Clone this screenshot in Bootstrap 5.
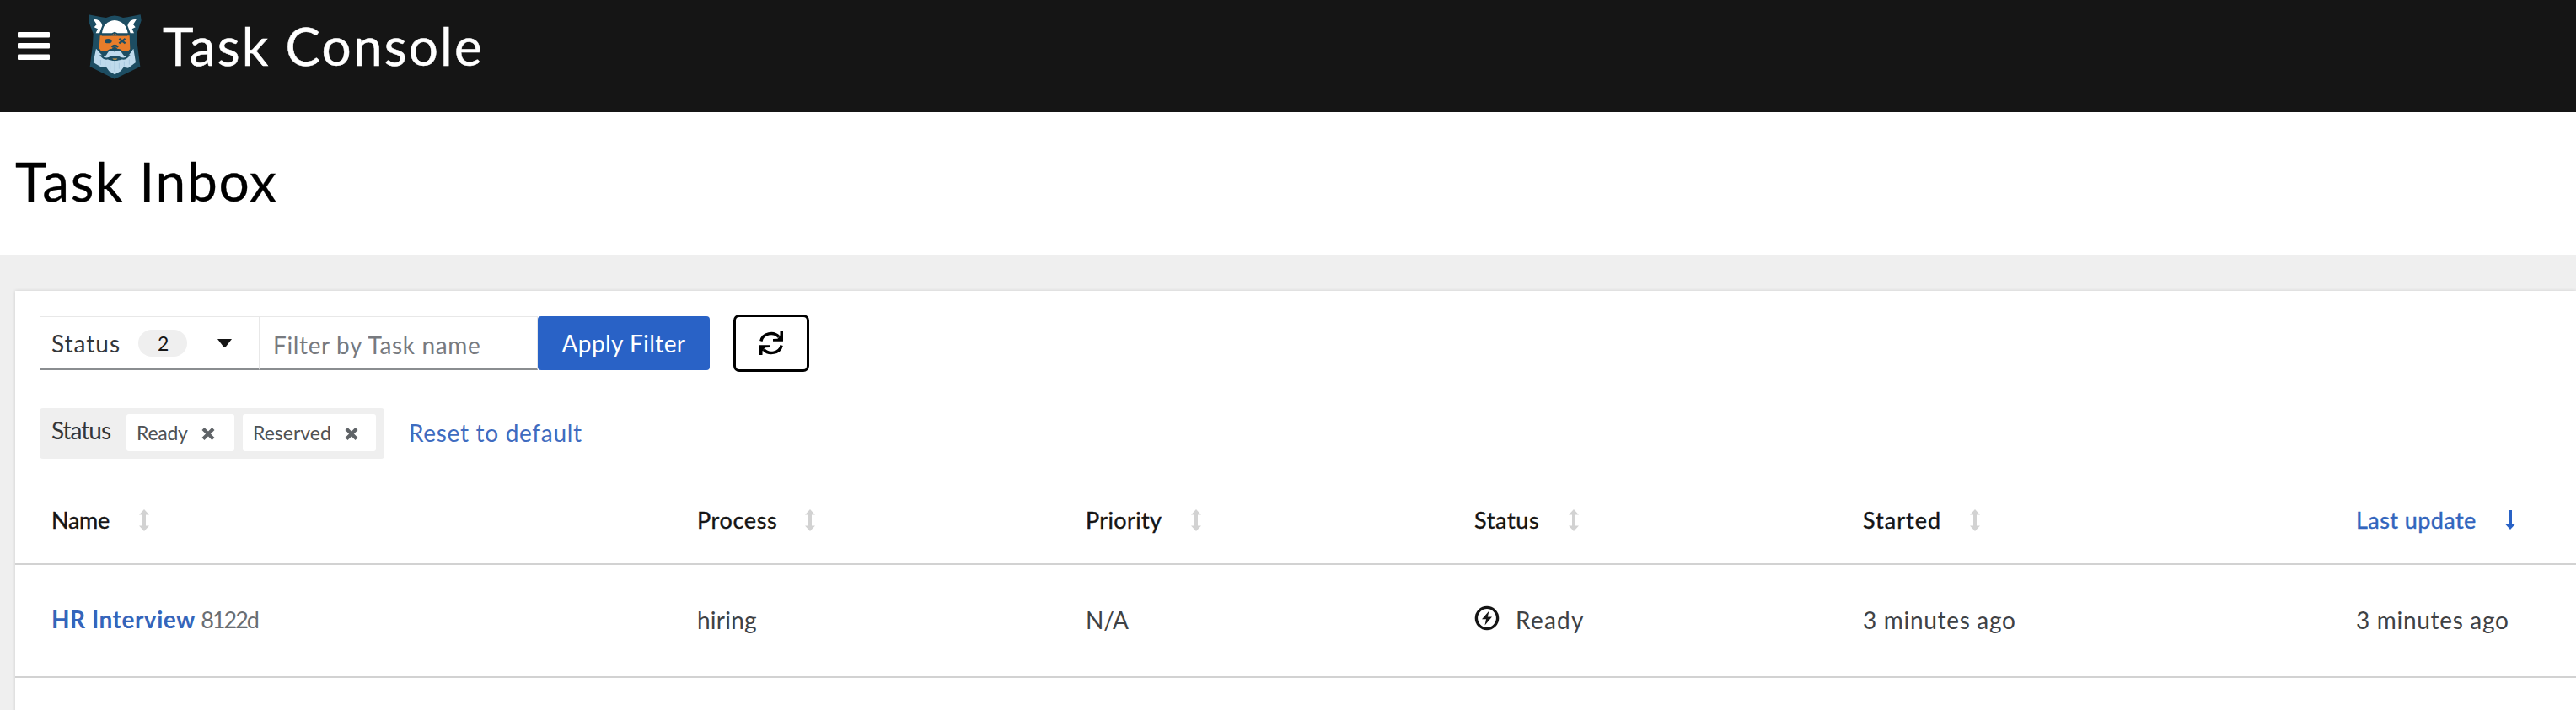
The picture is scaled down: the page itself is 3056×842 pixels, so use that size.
<!DOCTYPE html>
<html lang="en">
<head>
<meta charset="utf-8">
<meta name="viewport" content="width=device-width, initial-scale=1">
<title>Task Console</title>
<link rel="stylesheet" href="https://cdn.jsdelivr.net/npm/bootstrap@5.3.0/dist/css/bootstrap.min.css">
<style>
  body{font-family:Lato,"Liberation Sans",sans-serif;font-size:28px;line-height:34px;background:#efefef;color:#151515;height:842px;overflow:hidden}
  svg{display:block;flex:none}
  .topbar{height:133px;background:#151515;padding-left:21px}
  .burger{border:0;background:none;padding:0;margin-top:37px}
  .brand-logo{margin:5px 0 0 31px}
  .brand-name{color:#fff;font-size:62px;line-height:74px;letter-spacing:2.2px;margin:17px 0 0 13px;-webkit-text-stroke:.5px #fff}
  .page-head{height:170px;padding:43px 0 0 18px}
  .page-head h1{font-size:64px;font-weight:400;line-height:78px;letter-spacing:1.69px;color:#000;-webkit-text-stroke:.3px #000;margin:0}
  .panel{margin:42px 0 0 18px;height:500px;box-shadow:0 0 4px rgba(3,3,3,.14)}
  .tools{padding:30px 0 0 29px;height:94px}
  .field{height:64px;border:1px solid #e8e8e8;border-bottom:2px solid #8a8d90;border-radius:0;background:#fff}
  .select-toggle{width:261px;padding:0 0 0 13px;letter-spacing:1px;color:#33363a}
  .count{width:58px;height:32px;line-height:32px;margin-left:21px;background:#efefef;font-size:23px;letter-spacing:0;color:#151515;text-align:center;padding-left:1px}
  .caret{margin-left:36px}
  .task-name{width:330px;border-left-width:0;padding:4px 0 0 16px;font-size:28px;letter-spacing:.64px}
  .task-name::placeholder{color:#777a7f;opacity:1}
  .apply{width:204px;height:64px;background:#2962c6;color:#fff;border-radius:4px;border:0;padding:0;font-size:28px;letter-spacing:.42px}
  .refresh{width:90px;height:68px;margin:-2px 0 0 28px;border:3px solid #000;border-radius:7px;background:#fff;padding:0}
  .chips{padding:45px 0 0 29px;height:127px}
  .chip-group{height:60px;width:409px;background:#efefef;border-radius:4px;padding:7px 0 9px 14px}
  .chip-label{width:89px;letter-spacing:-1px;color:#33363a;line-height:38px}
  .chip{height:44px;background:#fff;border-radius:3px;font-size:23px;color:#4f5255;padding:0 0 1px 12px}
  .chip svg{margin-top:3px}
  .reset{color:#3f6cc0;letter-spacing:.69px;margin:12px 0 0 29px;text-decoration:none}
  .tasks{table-layout:fixed;width:3038px;margin:0}
  .tasks>:not(caption)>*>*{padding:0 0 0 43px;border-bottom:2px solid #d2d2d2;vertical-align:middle;background:transparent;color:#3f4245;white-space:nowrap}
  .tasks thead th{height:103px;font-size:27px;font-weight:400;color:#151515;-webkit-text-stroke:.4px currentColor;padding-bottom:0}
  .tasks thead th.sorted{color:#3265bd}
  .tasks tbody td{height:134px;padding-bottom:3px}
  .task-link{color:#3465bb;font-weight:700;letter-spacing:.51px;text-decoration:none}
  .task-id{color:#6a6e73;font-size:27px;letter-spacing:-2px;margin-left:-1px}
  .s4{letter-spacing:.64px}.ago{letter-spacing:.69px}
</style>
</head>
<body>
<header class="topbar d-flex align-items-start">
  <button class="burger" aria-label="Menu"><svg width="38" height="41" viewBox="0 0 38 41" fill="#fff"><rect y="1" width="38" height="6.500" rx="1"/><rect y="14" width="38" height="6.500" rx="1"/><rect y="27.500" width="38" height="6.500" rx="1"/></svg></button>
  <svg class="brand-logo" width="90" height="95" viewBox="0 0 270 285">
    <path d="M45 37L92 46L108 48Q138 33 168 48L184 46L230 37L233 58L217 105L219 145L229 222L138 266L50 222L60 145L62 105L46 62Z" fill="#1d4d62"/>
    <path d="M62 53Q91 54 94 76L84 103H71L78 88L65 82L74 72ZM216 53Q188 54 184 76L194 103H207L200 88L212 82L204 72Z" fill="#fff"/>
    <path d="M93 103Q98 61 138 57Q178 61 185 103L148 103L138 98L128 103Z" fill="#fff"/>
    <path d="M86 112H125L138 103L151 112H191L193 160L185 168L156 165L138 150L120 165L91 168L83 157Z" fill="#e87d2b"/>
    <path d="M93 110H183M138 101V112" stroke="#1d4d62" stroke-width="5"/>
    <ellipse cx="115" cy="131" rx="13" ry="8" fill="#1d4d62"/>
    <path d="M154 123l22 16M176 123l-22 16M128 153Q138 141 150 153" fill="none" stroke="#1d4d62" stroke-width="7"/>
    <path d="M72 158L94 182Q101 187 118 198L138 202L160 198Q177 187 188 182L205 158L213 207L186 227L170 224L160 238L138 250L118 238L109 225L91 224L62 207Z" fill="#bfdaec"/>
    <path d="M138 166Q119 155 109 174Q104 185 91 184Q105 202 127 187H150Q172 202 187 184Q174 185 168 174Q157 155 138 166Z" fill="#bfdaec" stroke="#1d4d62" stroke-width="6"/>
    <path d="M121 190H155L148 200H129Z" fill="#1d4d62"/><path d="M130 193H148L144 198H134Z" fill="#a88a4c"/>
    <path d="M88 198V216M104 203V222M122 209V232M138 207V240M154 209V230M172 203V221M190 196V215" stroke="#a5c6de" stroke-width="3"/>
  </svg>
  <div class="brand-name">Task Console</div>
</header>
<section class="page-head bg-white"><h1>Task Inbox</h1></section>
<main class="panel bg-white">
  <div class="tools d-flex align-items-start">
    <button class="field select-toggle d-flex align-items-center"><span>Status</span><span class="count rounded-pill">2</span><svg class="caret" width="17" height="10" viewBox="0 0 17 10"><path d="M0 0H17L10 9Q8.500 10.500 7 9Z" fill="#151515"/></svg></button>
    <input class="field task-name" type="text" placeholder="Filter by Task name" aria-label="Task name">
    <button class="btn apply">Apply Filter</button>
    <button class="refresh d-flex align-items-center justify-content-center" aria-label="Refresh"><svg width="30" height="30" viewBox="0 0 30 30"><path d="M2.800 12.500C5 2.800 18 .8 24 7.500M27.200 17.500C25 27.200 12 29.200 6 22.500" fill="none" stroke="#000" stroke-width="3.400"/><path d="M29 1V12.800H17V10L22.500 9.800L25.500 5.500V1ZM1 29V17.200H13V20L7.500 20.200L4.500 24.500V29Z"/></svg></button>
  </div>
  <div class="chips d-flex align-items-start">
    <div class="chip-group d-flex">
      <span class="chip-label">Status</span>
      <span class="chip d-flex align-items-center" style="width:128px"><span style="width:77px;letter-spacing:-.28px">Ready</span><svg width="16" height="15" viewBox="0 0 16 15"><path d="M2 1.500L14 13.500M14 1.500L2 13.500" stroke="#5f6367" stroke-width="4.200"/></svg></span>
      <span class="chip d-flex align-items-center" style="width:158px;margin-left:10px"><span style="width:109px">Reserved</span><svg width="16" height="15" viewBox="0 0 16 15"><path d="M2 1.500L14 13.500M14 1.500L2 13.500" stroke="#5f6367" stroke-width="4.200"/></svg></span>
    </div>
    <a class="reset" href="#">Reset to default</a>
  </div>
  <svg width="0" height="0" class="d-none"><symbol id="sort" viewBox="0 0 12 26"><path d="M6 0L12 6.500H8V19.500H12L6 26L0 19.500H4V6.500H0Z" fill="#d2d2d2"/></symbol></svg>
  <table class="table tasks">
    <colgroup><col style="width:766px"><col style="width:461px"><col style="width:461px"><col style="width:461px"><col style="width:585px"><col></colgroup>
    <thead><tr>
      <th><div class="d-flex align-items-center"><span style="width:104px;letter-spacing:-.28px">Name</span><svg width="12" height="26"><use href="#sort"/></svg></div></th>
      <th><div class="d-flex align-items-center"><span class="s4" style="width:128px">Process</span><svg width="12" height="26"><use href="#sort"/></svg></div></th>
      <th><div class="d-flex align-items-center"><span style="width:125px;letter-spacing:.35px">Priority</span><svg width="12" height="26"><use href="#sort"/></svg></div></th>
      <th><div class="d-flex align-items-center"><span class="s4" style="width:112px">Status</span><svg width="12" height="26"><use href="#sort"/></svg></div></th>
      <th><div class="d-flex align-items-center"><span style="width:127px;letter-spacing:1.03px">Started</span><svg width="12" height="26"><use href="#sort"/></svg></div></th>
      <th class="sorted"><div class="d-flex align-items-center"><span style="width:177px;letter-spacing:.43px">Last update</span><svg width="12" height="24" viewBox="0 0 12 24"><path d="M4 0H8V16.500H12L6 23L0 16.500H4Z" fill="#2962c6"/></svg></div></th>
    </tr></thead>
    <tbody><tr>
      <td><a class="task-link" href="#">HR Interview</a> <span class="task-id">8122d</span></td>
      <td><span style="letter-spacing:.22px">hiring</span></td>
      <td><span style="letter-spacing:-.23px">N/A</span></td>
      <td><div class="d-flex align-items-center"><svg width="30" height="30" viewBox="0 0 30 30" style="margin-top:-3px"><circle cx="15" cy="15" r="12.600" fill="none" stroke="#151515" stroke-width="3.400"/><path d="M17.500 6.500L9 16.300H14L12.500 23.500L21 13.500H15.800Z" fill="#151515"/></svg><span style="margin-left:19px;letter-spacing:1.25px">Ready</span></div></td>
      <td><span class="ago">3 minutes ago</span></td>
      <td><span class="ago">3 minutes ago</span></td>
    </tr></tbody>
  </table>
</main>
<script src="https://cdn.jsdelivr.net/npm/bootstrap@5.3.0/dist/js/bootstrap.bundle.min.js"></script>
</body>
</html>
